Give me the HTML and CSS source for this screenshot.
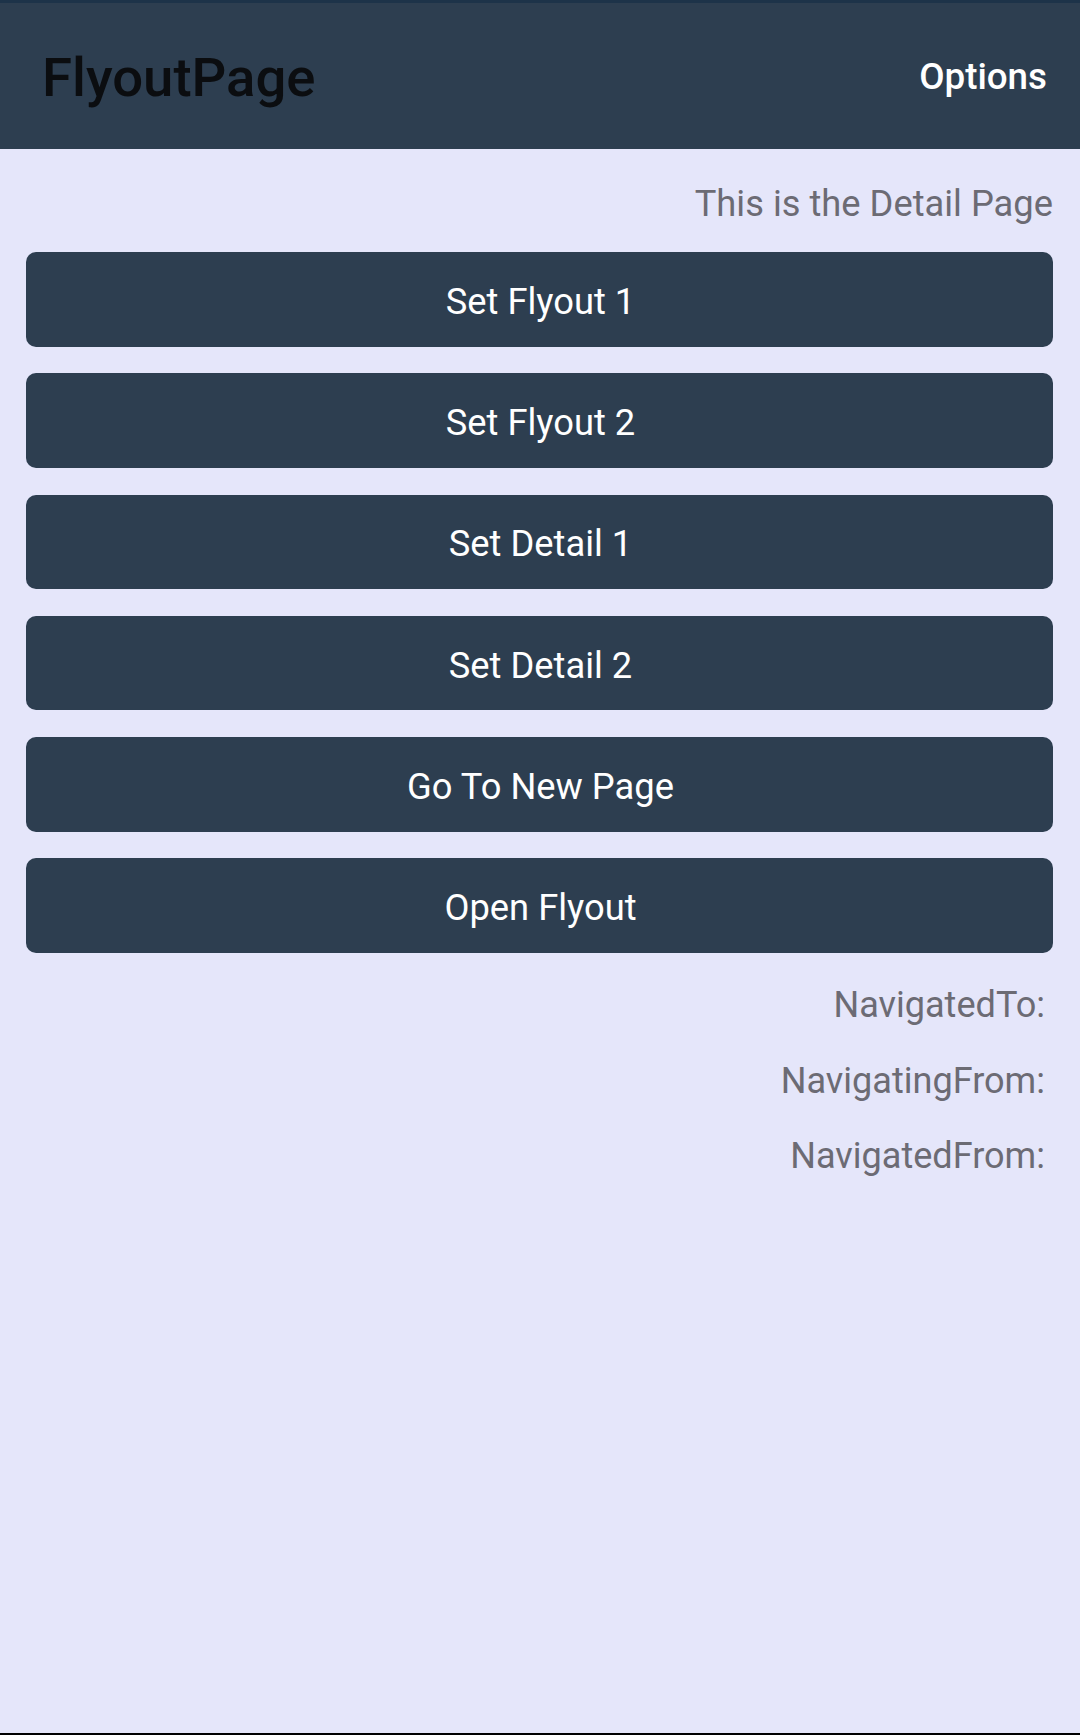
FILE: index.html
```html
<!DOCTYPE html>
<html lang="en">
<head>
<meta charset="utf-8">
<title>FlyoutPage</title>
<link rel="stylesheet" href="styles.css">
</head>
<body>
<div class="app">
  <div class="status-strip"></div>
  <header class="toolbar">
    <h1 class="toolbar-title">FlyoutPage</h1>
    <span class="toolbar-action">Options</span>
  </header>
  <main class="content">
    <p class="detail-label">This is the Detail Page</p>
    <div class="button-list">
      <button class="action-button">Set Flyout 1</button>
      <button class="action-button">Set Flyout 2</button>
      <button class="action-button">Set Detail 1</button>
      <button class="action-button">Set Detail 2</button>
      <button class="action-button">Go To New Page</button>
      <button class="action-button">Open Flyout</button>
    </div>
    <div class="nav-labels">
      <p class="nav-label">NavigatedTo:</p>
      <p class="nav-label">NavigatingFrom:</p>
      <p class="nav-label">NavigatedFrom:</p>
    </div>
  </main>
  <div class="bottom-edge"></div>
</div>
</body>
</html>
```

FILE: styles.css
```css
html, body {
  margin: 0;
  padding: 0;
}

body {
  font-family: Roboto, "Noto Sans", "Liberation Sans", sans-serif;
  background: #e5e6fa;
}

.app {
  width: 1080px;
  height: 1735px;
  display: flex;
  flex-direction: column;
  background: #e5e6fa;
}

.status-strip {
  height: 3px;
  background: #1d3349;
  flex: none;
}

.toolbar {
  height: 146px;
  flex: none;
  background: #2d3e50;
  display: flex;
  align-items: center;
  justify-content: space-between;
  padding: 0 33px 0 42px;
}

.toolbar-title {
  margin: 0;
  padding-top: 4px;
  font-size: 54.5px;
  font-weight: 500;
  color: #0b0d10;
  line-height: 1.17;
}

.toolbar-action {
  font-size: 36.75px;
  font-weight: 500;
  color: #ffffff;
  line-height: 1.17;
}

.content {
  flex: 1;
  padding: 33px 27px 0 26px;
}

.detail-label {
  margin: 0;
  text-align: right;
  font-size: 36.3px;
  line-height: 43px;
  color: #6c6b74;
}

.button-list {
  margin-top: 27px;
  display: flex;
  flex-direction: column;
  gap: 26.8px;
}

.action-button {
  height: 94.5px;
  border: none;
  border-radius: 10px;
  background: #2d3e50;
  color: #ffffff;
  font-family: Roboto, "Noto Sans", "Liberation Sans", sans-serif;
  font-size: 36.3px;
  font-weight: 400;
  padding: 4px 0 0 2px;
  text-align: center;
}

.nav-labels {
  margin-top: 31.5px;
  padding-right: 8px;
  display: flex;
  flex-direction: column;
  gap: 32.3px;
}

.nav-label {
  margin: 0;
  text-align: right;
  font-size: 36.1px;
  line-height: 43px;
  color: #6c6b74;
}

.bottom-edge {
  height: 2px;
  flex: none;
  background: #000000;
}
```
